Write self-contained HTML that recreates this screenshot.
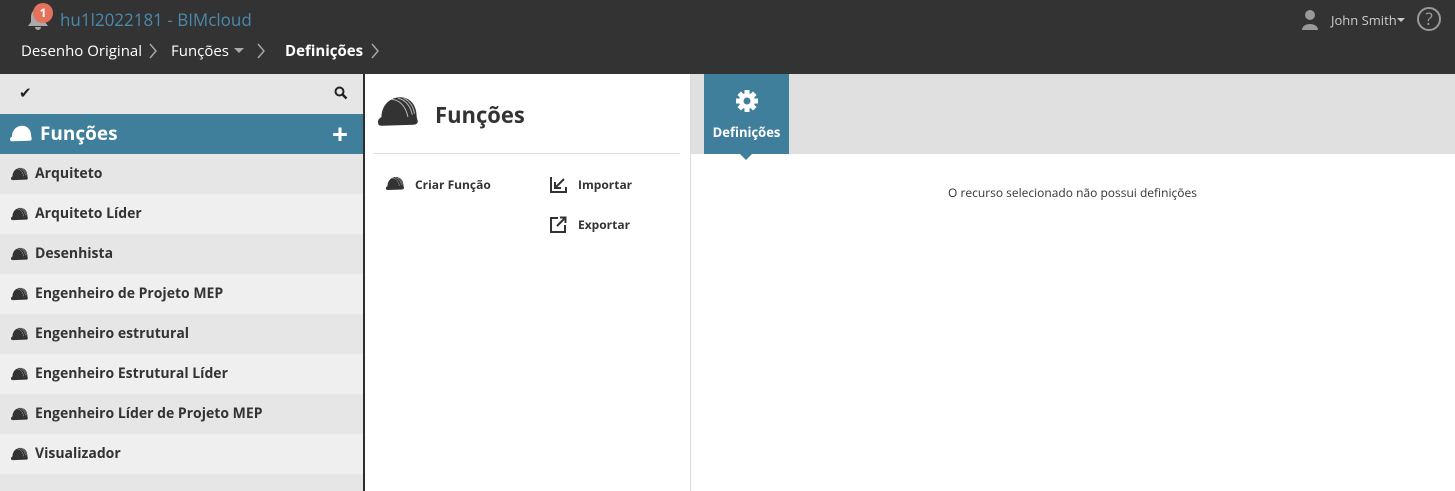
<!DOCTYPE html>
<html><head><meta charset="utf-8"><style>
*{margin:0;padding:0;box-sizing:border-box}
body{width:1455px;height:491px;overflow:hidden;font-family:"Open Sans","Liberation Sans",sans-serif;background:#fff;position:relative;color:#333}
.hdr{position:absolute;left:0;top:0;width:1455px;height:74px;background:#333}
.abs{position:absolute}
.left{position:absolute;left:0;top:74px;height:417px;background:#ececec;border-right:2px solid #2d2d2d;width:365px}
.row{height:40px;display:flex;align-items:center;padding-left:10px;font-weight:bold;font-size:14px;color:#333}
.row span{position:relative;top:-1px}
.row:nth-child(odd){background:#e6e6e6}.row:nth-child(even){background:#efefef}
.row svg{margin-right:6px}
</style></head><body>
<svg width="0" height="0" style="position:absolute"><defs><symbol id="h" viewBox="0 0 40 30"><path d="M2 26 C1 22 4 21 5 20 C5 9 13 2 22 2 C31 2 37 9 37 20 L38 24 C38 26 36 27 34 27 L6 28 C3 28 2 27 2 26 Z" fill="currentColor"/><path d="M14 4 C20 4 27 9 29 20 M20 3 C26 4 31 9 33 18 M25 3 C30 5 34 10 35 17" stroke="#fff" stroke-width="1" fill="none" opacity=".6"/></symbol>
<symbol id="c" viewBox="0 0 10 16"><path d="M2 1 L8 8 L2 15" stroke="#aaa" stroke-width="1.4" fill="none"/></symbol></defs></svg>
<div class="hdr">
 <svg class="abs" style="left:27px;top:7px" width="22" height="24" viewBox="0 0 22 24"><path d="M11 2 C6 2 4 6 4 10 L4 15 L1 19 L21 19 L18 15 L18 10 C18 6 16 2 11 2Z M8 20 a3 3 0 0 0 6 0Z" fill="#aaa"/></svg>
 <div class="abs" style="left:33px;top:3px;width:20px;height:20px;border-radius:50%;background:#e5735c;color:#fff;font-size:12px;font-weight:bold;text-align:center;line-height:20px">1</div>
 <div class="abs" style="left:60px;top:8px;font-size:17px;color:#4a89ad">hu1l2022181 - BIMcloud</div>
 <div class="abs" style="left:21px;top:41px;font-size:15px;color:#fff">Desenho Original</div>
 <svg class="abs" style="left:148px;top:43px" width="10" height="16"><use href="#c"/></svg>
 <div class="abs" style="left:171px;top:41px;font-size:15px;color:#fff">Funções</div>
 <div class="abs" style="left:234px;top:48px;border:5px solid transparent;border-top-color:#aaa"></div>
 <svg class="abs" style="left:256px;top:43px" width="10" height="16"><use href="#c"/></svg>
 <div class="abs" style="left:285px;top:41px;font-size:15px;color:#fff;font-weight:bold">Definições</div>
 <svg class="abs" style="left:370px;top:43px" width="10" height="16"><use href="#c"/></svg>
 <svg class="abs" style="left:1301px;top:9px" width="18" height="22" viewBox="0 0 18 22"><circle cx="9" cy="6" r="5" fill="#999"/><path d="M1 21 C1 13 17 13 17 21Z" fill="#999"/></svg>
 <div class="abs" style="left:1331px;top:11px;font-size:13px;color:#ccc">John Smith</div>
 <div class="abs" style="left:1397px;top:18px;border:4px solid transparent;border-top-color:#ccc"></div>
 <div class="abs" style="left:1417px;top:7px;width:24px;height:24px;border:2px solid #999;border-radius:50%;color:#999;font-size:17px;text-align:center;line-height:20px">?</div>
</div>
<div class="left">
 <div style="height:40px;background:#e6e6e6;position:relative">
  <div class="abs" style="left:19px;top:9px;font-size:15px;color:#222">&#10004;</div>
  <svg class="abs" style="left:334px;top:12px" width="14" height="14" viewBox="0 0 14 14"><circle cx="5.5" cy="5.5" r="4" stroke="#222" stroke-width="2" fill="none"/><path d="M8.5 8.5 L12.5 12.5" stroke="#222" stroke-width="2.5"/></svg>
 </div>
 <div style="height:40px;background:#3f7f9c;position:relative;color:#fff">
  <svg class="abs" style="left:9px;top:10px;color:#fff" width="24" height="19"><use href="#h"/></svg>
  <div class="abs" style="left:40px;top:6px;font-size:19px;font-weight:bold">Funções</div>
  <div class="abs" style="left:332px;top:1px;font-size:28px;font-weight:bold">+</div>
 </div>
 <div>
 <div class="row"><svg width="19" height="14" style="color:#333"><use href="#h"/></svg><span>Arquiteto</span></div>
 <div class="row"><svg width="19" height="14" style="color:#333"><use href="#h"/></svg><span>Arquiteto Líder</span></div>
 <div class="row"><svg width="19" height="14" style="color:#333"><use href="#h"/></svg><span>Desenhista</span></div>
 <div class="row"><svg width="19" height="14" style="color:#333"><use href="#h"/></svg><span>Engenheiro de Projeto MEP</span></div>
 <div class="row"><svg width="19" height="14" style="color:#333"><use href="#h"/></svg><span>Engenheiro estrutural</span></div>
 <div class="row"><svg width="19" height="14" style="color:#333"><use href="#h"/></svg><span>Engenheiro Estrutural Líder</span></div>
 <div class="row"><svg width="19" height="14" style="color:#333"><use href="#h"/></svg><span>Engenheiro Líder de Projeto MEP</span></div>
 <div class="row"><svg width="19" height="14" style="color:#333"><use href="#h"/></svg><span>Visualizador</span></div>
 <div class="row" style="height:17px"></div>
 </div>
</div>
<div class="abs" style="left:690px;top:74px;width:1px;height:417px;background:#ddd"></div>
<svg class="abs" style="left:376px;top:95px;color:#333" width="44" height="33"><use href="#h"/></svg>
<div class="abs" style="left:435px;top:100px;font-size:22px;font-weight:bold;color:#333">Funções</div>
<div class="abs" style="left:374px;top:153px;width:306px;height:1px;background:#ddd"></div>
<svg class="abs" style="left:385px;top:176px;color:#333" width="20" height="15"><use href="#h"/></svg>
<div class="abs" style="left:415px;top:176px;font-size:12px;font-weight:bold">Criar Função</div>
<svg class="abs" style="left:550px;top:176px" width="17" height="17" viewBox="0 0 17 17"><path d="M1 1 V16 H16 V11 M14 3 L5 12 M5 6 V12 H11" stroke="#333" stroke-width="2" fill="none"/></svg>
<div class="abs" style="left:578px;top:176px;font-size:12px;font-weight:bold">Importar</div>
<svg class="abs" style="left:550px;top:216px" width="17" height="17" viewBox="0 0 17 17"><path d="M8 2 H1 V16 H15 V9 M7 10 L15 2 M10 1.5 H15.5 V7" stroke="#333" stroke-width="2" fill="none"/></svg>
<div class="abs" style="left:578px;top:216px;font-size:12px;font-weight:bold">Exportar</div>
<div class="abs" style="left:691px;top:74px;width:764px;height:80px;background:#e0e0e0"></div>
<div class="abs" style="left:704px;top:74px;width:85px;height:80px;background:#3f7f9c;color:#fff;text-align:center">
 <svg style="margin-top:15px" width="24" height="24" viewBox="0 0 24 24"><g fill="#fff"><circle cx="12" cy="12" r="8"/><g id="t"><rect x="9.5" y="1" width="5" height="5"/><rect x="9.5" y="18" width="5" height="5"/></g><use href="#t" transform="rotate(45 12 12)"/><use href="#t" transform="rotate(90 12 12)"/><use href="#t" transform="rotate(135 12 12)"/></g><circle cx="12" cy="12" r="3.5" fill="#3f7f9c"/></svg>
 <div style="font-size:13px;font-weight:bold;margin-top:5px">Definições</div>
</div>
<div class="abs" style="left:740px;top:154px;border:6px solid transparent;border-top-color:#3f7f9c"></div>
<div class="abs" style="left:948px;top:184px;font-size:12px;color:#333">O recurso selecionado não possui definições</div>
</body></html>
